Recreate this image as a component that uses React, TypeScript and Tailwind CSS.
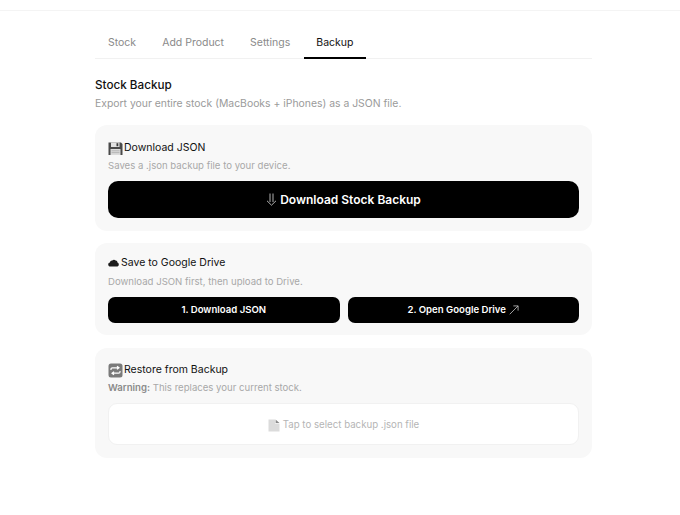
function Floppy() {
  return (
    <svg width="15" height="15" viewBox="0 0 15 15" className="mr-[1px] shrink-0">
      <path d="M0.5 1.5 H13 L14.5 3 V14 H0.5 Z" fill="#4a4a4a" />
      <rect x="3" y="1.5" width="8.5" height="4.5" fill="#e2e2e2" />
      <rect x="8.5" y="2.2" width="1.8" height="3" fill="#3a3a3a" />
      <rect x="2.5" y="8" width="10" height="6" fill="#dcdcdc" />
      <rect x="3.5" y="9.5" width="8" height="0.7" fill="#a5a5a5" />
      <rect x="3.5" y="11.4" width="8" height="0.7" fill="#a5a5a5" />
    </svg>
  );
}
function Cloud() {
  return (
    <svg width="11" height="8" viewBox="0 0 11 8" className="mr-[2px] shrink-0">
      <path d="M2.6 7.6 C1 7.6 0.2 6.6 0.2 5.5 C0.2 4.4 1 3.7 1.9 3.6 C2.1 2.2 3.2 1.4 4.3 1.6 C5 0.6 6.7 0.4 7.6 1.6 C8.7 1.5 9.5 2.5 9.4 3.5 C10.3 3.8 10.8 4.5 10.8 5.4 C10.8 6.7 9.9 7.6 8.6 7.6 Z" fill="#1c1c1c" />
    </svg>
  );
}
function Repeat() {
  return (
    <svg width="15" height="15" viewBox="0 0 15 15" className="mr-[1px] shrink-0">
      <rect x="0.5" y="0.5" width="14" height="14" rx="2.5" fill="#7a7a7a" />
      <path d="M3 7 V6 Q3 4.8 4.3 4.8 H10.5 M9 3.2 L11 4.8 L9 6.4" fill="none" stroke="#fff" strokeWidth="1.2" />
      <path d="M12 8 V9 Q12 10.2 10.7 10.2 H4.5 M6 8.6 L4 10.2 L6 11.8" fill="none" stroke="#fff" strokeWidth="1.2" />
    </svg>
  );
}
function Doc() {
  return (
    <svg width="12" height="13" viewBox="0 0 12 13" className="mr-[3px] shrink-0">
      <path d="M0.5 0.5 H7 L7 4.5 H11.5 V12.5 H0.5 Z" fill="#dbdbdb" />
      <path d="M7.6 0.5 L11.5 4 H7.6 Z" fill="#8a8a8a" />
    </svg>
  );
}
function DoubleDown() {
  return (
    <svg width="11" height="13" viewBox="0 0 11 13" className="mr-[3px] shrink-0">
      <path d="M4 0.5 V9 M7 0.5 V9 M1 7.8 L5.5 12.2 L10 7.8" fill="none" stroke="#b0b0b0" strokeWidth="1" />
    </svg>
  );
}
function NorthEast() {
  return (
    <svg width="10" height="10" viewBox="0 0 11 11" className="ml-[3px] shrink-0">
      <path d="M0.8 10.2 L10 1 M4.8 1 H10 V6.2" fill="none" stroke="#c0c0c0" strokeWidth="0.9" />
    </svg>
  );
}

const tab = "-mb-px px-[13px] pt-[5px]";

export default function App() {
  return (
    <div className="min-h-[515px] bg-white font-['Inter','Noto_Sans',sans-serif] text-[#111]">
      <div className="h-[11px] border-b border-[#f4f4f4]" />
      <main className="ml-[95px] w-[497px]">
        <nav className="mt-[19px] flex h-[29px] border-b border-[#f1f1f1] text-[10.5px] leading-[16px] text-[#8a8a8a]">
          <span className={tab}>Stock</span>
          <span className={tab}>Add Product</span>
          <span className={tab}>Settings</span>
          <span className="-mb-px ml-px border-b-2 border-black pt-[5px] pr-[13px] pl-[12px] text-[#111]">Backup</span>
        </nav>
        <h2 className="mt-[18px] text-[11.7px] leading-[16px] font-medium">Stock Backup</h2>
        <p className="mt-[3px] text-[10.4px] leading-[16px] text-[#9a9a9a]">Export your entire stock (MacBooks + iPhones) as a JSON file.</p>

        <section className="mt-[13px] rounded-[12px] bg-[#f8f8f8] px-[13px] pt-[15px] pb-[13px]">
          <h3 className="flex items-center text-[10.5px] leading-[16px]"><Floppy />Download JSON</h3>
          <p className="mt-[3px] text-[9.6px] leading-[14px] text-[#a8a8a8]">Saves a .json backup file to your device.</p>
          <button className="mt-[8px] flex h-[37px] w-full items-center justify-center rounded-[10px] bg-black text-[12px] font-semibold text-white"><DoubleDown />Download Stock Backup</button>
        </section>

        <section className="mt-[12px] rounded-[12px] bg-[#f8f8f8] px-[13px] pt-[12px] pb-[12px]">
          <h3 className="flex items-center text-[10.5px] leading-[16px]"><Cloud />Save to Google Drive</h3>
          <p className="mt-[4px] text-[9.6px] leading-[14px] text-[#a8a8a8]">Download JSON first, then upload to Drive.</p>
          <div className="mt-[8px] grid grid-cols-2 gap-[8px]">
            <button className="h-[26px] rounded-[7px] bg-black text-[9.6px] font-semibold text-white">1. Download JSON</button>
            <button className="flex h-[26px] items-center justify-center rounded-[7px] bg-black text-[9.6px] font-semibold text-white">2. Open Google Drive<NorthEast /></button>
          </div>
        </section>

        <section className="mt-[13px] rounded-[12px] bg-[#f8f8f8] px-[13px] pt-[14px] pb-[13px]">
          <h3 className="flex items-center text-[10.5px] leading-[16px]"><Repeat />Restore from Backup</h3>
          <p className="mt-[3px] text-[9.6px] leading-[14px] text-[#a8a8a8]"><b className="font-semibold text-[#8a8a8a]">Warning:</b> This replaces your current stock.</p>
          <div className="mt-[8px] flex h-[42px] items-center justify-center rounded-[9px] border border-[#f1f1f1] bg-white pt-[2px] text-[9.7px] text-[#b5b5b5]"><Doc />Tap to select backup .json file</div>
        </section>
      </main>
    </div>
  );
}
